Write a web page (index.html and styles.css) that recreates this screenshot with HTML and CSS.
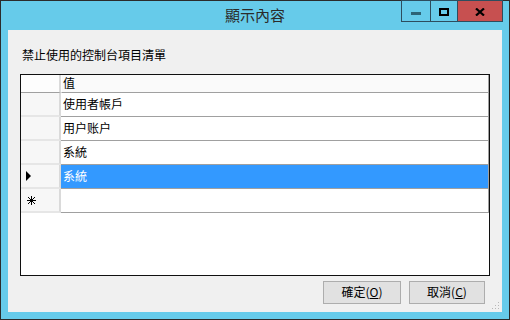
FILE: index.html
```
<!DOCTYPE html>
<html lang="zh-Hant">
<head>
<meta charset="utf-8">
<link rel="stylesheet" href="styles.css">
</head>
<body>
<div class="window">
  <div class="titlebar">
    <div class="spacer"></div>
    <div class="title">顯示內容</div>
    <div class="caption">
      <div class="cbtn min"><span class="min-bar"></span></div>
      <div class="cbtn max"><span class="max-box"></span></div>
      <div class="cbtn close">
        <svg width="10" height="8" viewBox="0 0 10 8"><path d="M1 0.5 L9 7.5 M9 0.5 L1 7.5" stroke="#000" stroke-width="2.2"/></svg>
      </div>
    </div>
  </div>
  <div class="client">
    <div class="label">禁止使用的控制台項目清單</div>
    <div class="grid">
      <div class="row header">
        <div class="rh corner"></div>
        <div class="cell hcell">值</div>
      </div>
      <div class="row">
        <div class="rh"></div>
        <div class="cell">使用者帳戶</div>
      </div>
      <div class="row">
        <div class="rh"></div>
        <div class="cell">用户账户</div>
      </div>
      <div class="row">
        <div class="rh"></div>
        <div class="cell">系統</div>
      </div>
      <div class="row selected">
        <div class="rh"><span class="arrow"></span></div>
        <div class="cell">系統</div>
      </div>
      <div class="row">
        <div class="rh">
          <svg class="star" width="9" height="9" viewBox="0 0 9 9"><path d="M4.5 0 V9 M0 4.5 H9 M1 1 L8 8 M8 1 L1 8" stroke="#000" stroke-width="1"/></svg>
        </div>
        <div class="cell"></div>
      </div>
    </div>
    <div class="buttons">
      <div class="btn">確定(<u>O</u>)</div>
      <div class="btn">取消(<u>C</u>)</div>
    </div>
    <svg class="grip" width="8" height="8" viewBox="0 0 8 8">
      <rect x="6" y="0" width="1" height="1" fill="#b8b8b8"/>
      <rect x="3" y="3" width="1" height="1" fill="#b8b8b8"/>
      <rect x="6" y="3" width="1" height="1" fill="#b8b8b8"/>
      <rect x="0" y="6" width="1" height="1" fill="#b8b8b8"/>
      <rect x="3" y="6" width="1" height="1" fill="#b8b8b8"/>
      <rect x="6" y="6" width="1" height="1" fill="#b8b8b8"/>
    </svg>
  </div>
</div>
</body>
</html>
```
FILE: styles.css
```
html, body {
  margin: 0;
  padding: 0;
  background: #66cbea;
}
.window {
  width: 510px;
  height: 320px;
  box-sizing: border-box;
  border: 1px solid #2b2b2b;
  background: #66cbea;
  display: flex;
  flex-direction: column;
  font-family: "Noto Sans CJK TC", "Liberation Sans", sans-serif;
}
.titlebar {
  height: 29px;
  display: grid;
  grid-template-columns: 1fr auto 1fr;
}
.title {
  font-size: 15px;
  line-height: 16px;
  padding-top: 6px;
  color: #2b2b2b;
}
.caption {
  display: flex;
  justify-self: end;
  align-self: start;
  margin-right: 6px;
  margin-top: -1px;
}
.cbtn {
  height: 20px;
  border: 1px solid #2d4d5e;
  display: flex;
  align-items: center;
  justify-content: center;
}
.cbtn + .cbtn {
  border-left: none;
}
.min { width: 28px; }
.max { width: 26px; }
.close { width: 44px; background: #c75050; }
.min-bar {
  width: 10px;
  height: 3px;
  background: #2d6477;
  margin-top: 5px;
}
.max-box {
  width: 6px;
  height: 4px;
  border: 2px solid #000;
  margin-top: 2px;
}
.close svg { margin-top: 1px; }
.client {
  margin: 0 7px;
  height: 282px;
  background: #f0f0f0;
  border-top: 0;
  display: flex;
  flex-direction: column;
  position: relative;
}
.label {
  font-size: 12px;
  line-height: 16px;
  margin: 17px 0 0 14px;
  color: #000;
}
.grid {
  margin: 11px 0 0 12px;
  width: 470px;
  height: 202px;
  box-sizing: border-box;
  border: 1px solid #101010;
  background: #fff;
}
.row {
  display: flex;
  height: 24px;
}
.row.header {
  height: 18px;
}
.rh {
  width: 38px;
  flex: none;
  background: #f7f7f7;
  border-right: 2px solid #dadada;
  border-bottom: 2px solid #e6e6e6;
  display: flex;
  align-items: center;
  box-sizing: border-box;
  width: 40px;
}
.corner {
  background: #fdfdfd;
  border-bottom: 1px solid #a0a0a0;
}
.cell {
  flex: 1;
  border-bottom: 1px solid #a0a0a0;
  border-right: 1px solid #a0a0a0;
  font-size: 12px;
  line-height: 22px;
  padding-left: 2px;
  color: #000;
  box-sizing: border-box;
}
.hcell {
  background: #fafafa;
  border-left: 1px solid #fff;
  line-height: 16px;
  padding-left: 1px;
}
.selected .cell {
  background: #3399ff;
  color: #fff;
}
.arrow {
  width: 0;
  height: 0;
  border-left: 5px solid #000;
  border-top: 5px solid transparent;
  border-bottom: 5px solid transparent;
  margin-left: 5px;
}
.star {
  margin-left: 6px;
}
.buttons {
  display: flex;
  justify-content: flex-end;
  gap: 8px;
  margin: 5px 17px 0 0;
}
.btn {
  width: 78px;
  height: 23px;
  box-sizing: border-box;
  border: 1px solid #adadad;
  background: #e1e1e1;
  font-size: 12px;
  line-height: 20px;
  text-align: center;
  color: #000;
}
.btn + .btn { width: 76px; }
.btn u { text-underline-offset: 1px; }
.grip {
  position: absolute;
  right: 2px;
  bottom: 2px;
}
```
